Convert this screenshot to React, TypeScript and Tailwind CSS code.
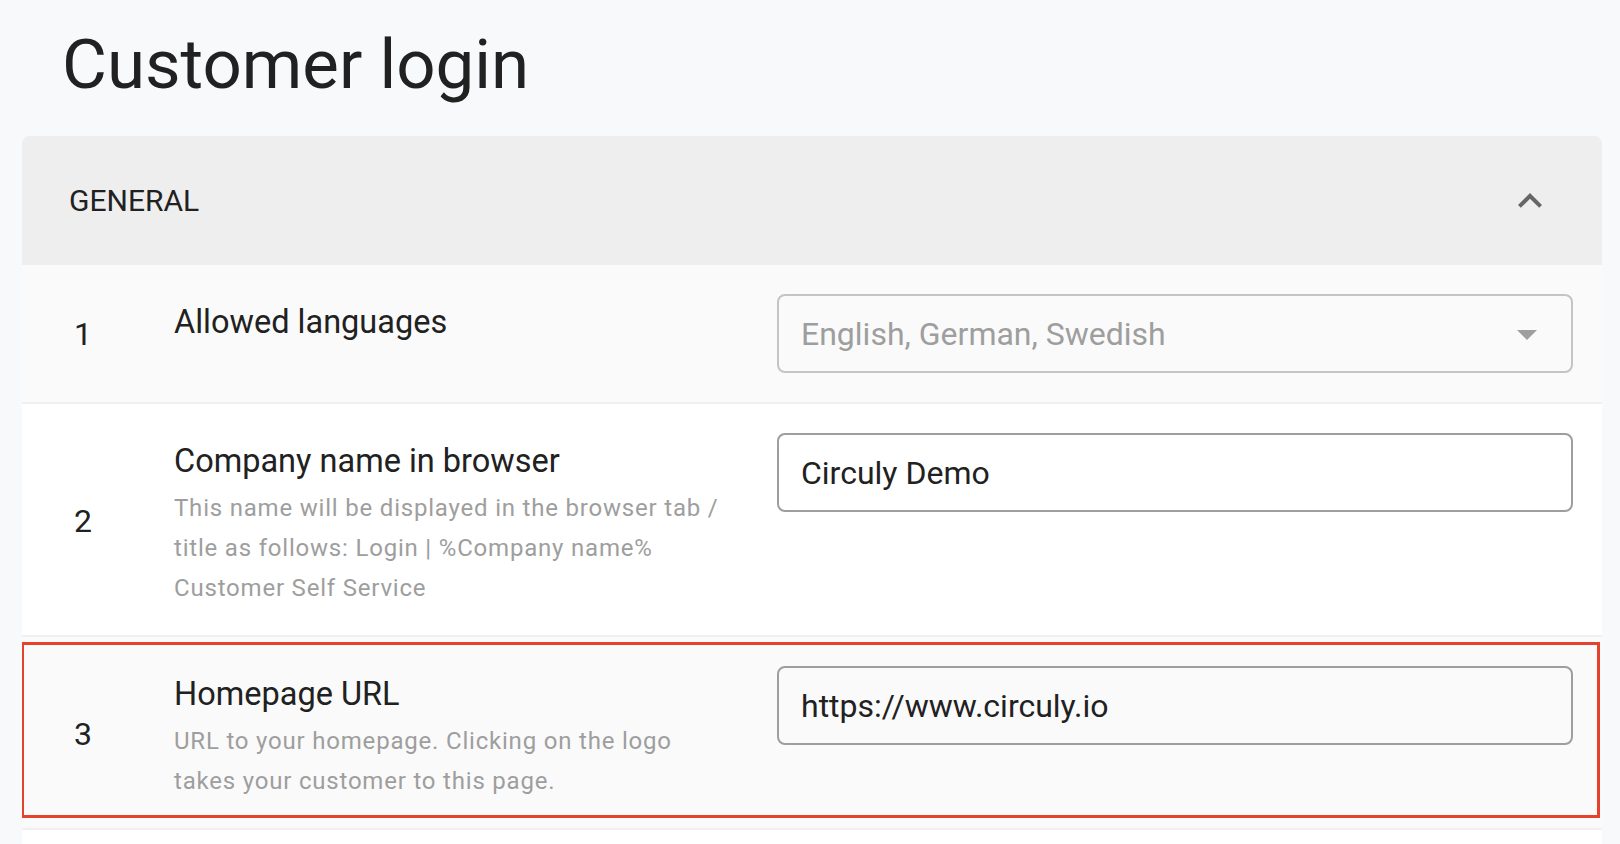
import React from "react";

interface Setting {
  id: number;
  label: string;
  hint?: string;
  value: string;
  kind: "select" | "text";
  highlighted?: boolean;
}

const settings: Setting[] = [
  { id: 1, label: "Allowed languages", value: "English, German, Swedish", kind: "select" },
  {
    id: 2,
    label: "Company name in browser",
    hint: "This name will be displayed in the browser tab / title as follows: Login | %Company name% Customer Self Service",
    value: "Circuly Demo",
    kind: "text",
  },
  {
    id: 3,
    label: "Homepage URL",
    hint: "URL to your homepage. Clicking on the logo takes your customer to this page.",
    value: "https://www.circuly.io",
    kind: "text",
    highlighted: true,
  },
];

const ExpandLess = () => (
  <svg width="48" height="48" viewBox="0 0 24 24" fill="currentColor">
    <path d="M12 8l-6 6 1.41 1.41L12 10.83l4.59 4.58L18 14z" />
  </svg>
);

const ArrowDropDown = () => (
  <svg width="48" height="48" viewBox="0 0 24 24" fill="currentColor">
    <path d="M7 10l5 5 5-5z" />
  </svg>
);

const SettingRow: React.FC<{ setting: Setting; odd: boolean }> = ({ setting, odd }) => {
  return (
    <div
      className={`relative flex items-stretch pl-[52px] pr-[29px] pt-[29px] border-b-2 border-[#f0f0f0] ${
        setting.hint ? "pb-[27px]" : "pb-[29px]"
      } ${odd ? "bg-[#fafafa]" : "bg-white"}`}
    >
      <div className="w-[100px] flex items-center text-[32px] leading-[48px] text-[#212121]">
        {setting.id}
      </div>

      <div className="w-[556px] flex flex-col">
        <p className="pt-[3px] text-[32.5px] leading-[50px] text-[#212121]">{setting.label}</p>
        {setting.hint && (
          <p className="mt-[2px] text-[24px] leading-[40px] tracking-[0.8px] text-[#9e9e9e]">
            {setting.hint}
          </p>
        )}
      </div>

      <div className="ml-auto w-[796px]">
        {setting.kind === "select" ? (
          <div className="h-[79px] flex items-center justify-between border-2 border-[#c4c4c4] rounded-[8px] pl-[22px] pr-[20px]">
            <span className="text-[32px] text-[#9e9e9e]">{setting.value}</span>
            <span className="text-[#9e9e9e]">
              <ArrowDropDown />
            </span>
          </div>
        ) : (
          <div className="h-[79px] flex items-center border-2 border-[#9e9e9e] rounded-[8px] pl-[22px]">
            <span className="text-[32px] text-[#212121]">{setting.value}</span>
          </div>
        )}
      </div>

      {setting.highlighted && (
        <div className="absolute left-[-1px] right-[2px] top-[5px] h-[176px] border-[3px] border-[#e5412d] pointer-events-none" />
      )}
    </div>
  );
};

const App: React.FC = () => {
  return (
    <div className="w-full h-[844px] overflow-hidden bg-[#f8f9fb] font-[Roboto,sans-serif] pt-[23px]">
      <h1 className="ml-[62px] mb-[29px] text-[69px] leading-[84px] font-[400] text-[#212121]">
        Customer login
      </h1>

      <div className="ml-[22px] mr-[18px] rounded-t-[8px] overflow-hidden">
        <div className="h-[129px] bg-[#eeeeee] flex items-center justify-between pl-[47px] pr-[48px]">
          <span className="text-[30px] text-[#212121]">GENERAL</span>
          <span className="text-[#666666]">
            <ExpandLess />
          </span>
        </div>

        {settings.map((s, i) => (
          <SettingRow key={s.id} setting={s} odd={i % 2 === 0} />
        ))}

        <div className="h-[120px] bg-white" />
      </div>
    </div>
  );
};

export default App;
